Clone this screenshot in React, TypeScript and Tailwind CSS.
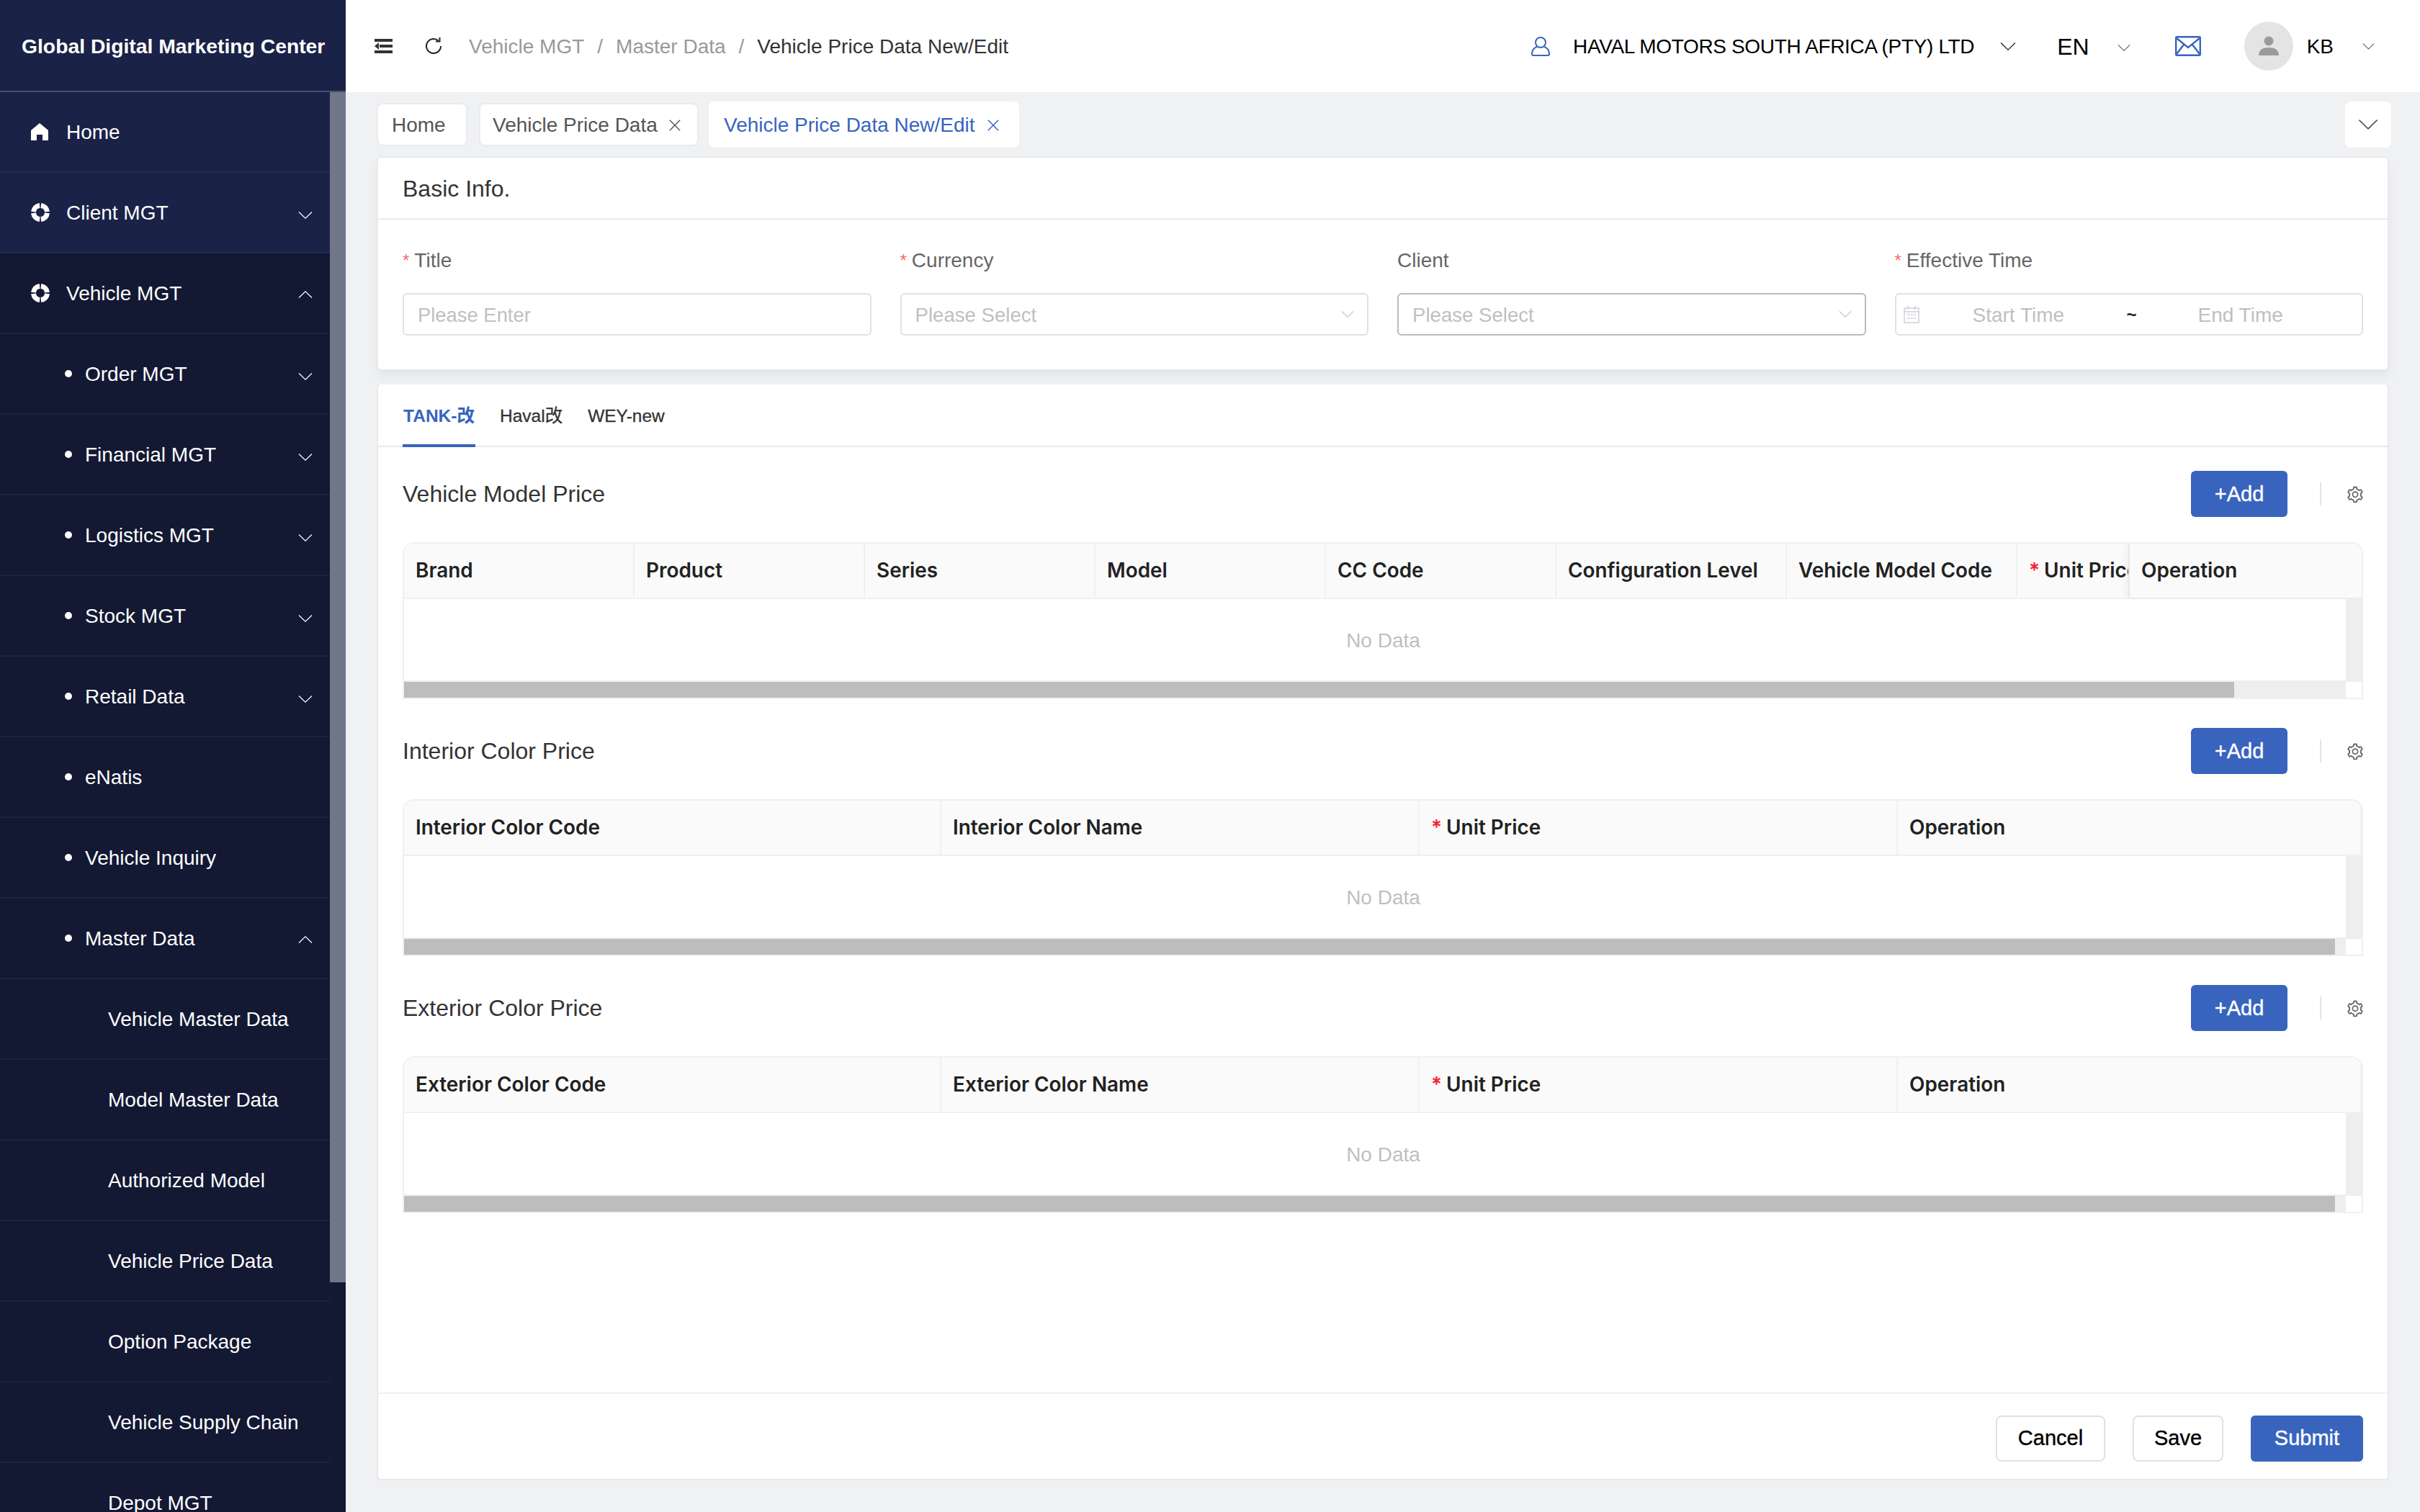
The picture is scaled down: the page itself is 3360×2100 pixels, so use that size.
import React from "react";
import { AiOutlineSetting } from "react-icons/ai";

const font = "font-['Liberation_Sans','Noto_Sans_CJK_SC',sans-serif]";

const Chevron = ({ up, className }: { up?: boolean; className?: string }) => (
  <svg viewBox="0 0 20 10" fill="none" stroke="currentColor" strokeWidth="1.2" className={className}>
    <polyline points={up ? "1,9.5 10,0.8 19,9.5" : "1,0.5 10,9.2 19,0.5"} />
  </svg>
);

const Close = () => (
  <svg viewBox="0 0 20 20" fill="none" stroke="currentColor" strokeWidth="1.6" className="w-[18px] h-[18px]">
    <path d="M2 2 L18 18 M18 2 L2 18" />
  </svg>
);

const HomeIcon = () => (
  <svg viewBox="0 0 24 24" fill="white" className="w-[24px] h-[24px]">
    <path d="M12 0 L24 10 V24 H16 V16 H8 V24 H0 V10 Z" />
  </svg>
);

const AimIcon = () => (
  <svg viewBox="0 0 26 26" fill="none" stroke="white" strokeWidth="7" className="w-[26px] h-[26px]">
    <circle cx="13" cy="13" r="9.5" pathLength={100} strokeDasharray="22 3" strokeDashoffset={-1.5} />
  </svg>
);

type MenuItem = { label: string; level: 1 | 2 | 3; icon?: "home" | "aim"; arrow?: "up" | "down"; light?: boolean };

const menu: MenuItem[] = [
  { label: "Home", level: 1, icon: "home", light: true },
  { label: "Client MGT", level: 1, icon: "aim", arrow: "down", light: true },
  { label: "Vehicle MGT", level: 1, icon: "aim", arrow: "up" },
  { label: "Order MGT", level: 2, arrow: "down" },
  { label: "Financial MGT", level: 2, arrow: "down" },
  { label: "Logistics MGT", level: 2, arrow: "down" },
  { label: "Stock MGT", level: 2, arrow: "down" },
  { label: "Retail Data", level: 2, arrow: "down" },
  { label: "eNatis", level: 2 },
  { label: "Vehicle Inquiry", level: 2 },
  { label: "Master Data", level: 2, arrow: "up" },
  { label: "Vehicle Master Data", level: 3 },
  { label: "Model Master Data", level: 3 },
  { label: "Authorized Model", level: 3 },
  { label: "Vehicle Price Data", level: 3 },
  { label: "Option Package", level: 3 },
  { label: "Vehicle Supply Chain", level: 3 },
  { label: "Depot MGT", level: 3 },
];

const Sidebar = () => (
  <aside className="w-[480px] h-[2100px] shrink-0 bg-[#131933] flex flex-col overflow-hidden text-white">
    <div className="h-[128px] shrink-0 bg-[#1a2247] border-b-2 border-[#4a5070] flex items-center pl-[30px] pt-[2px]">
      <span className="text-[28.3px] font-bold whitespace-nowrap">Global Digital Marketing Center</span>
    </div>
    <div className="flex flex-1 min-h-0">
      <nav className="flex-1 min-w-0">
        {menu.map((m) => (
          <div
            key={m.label}
            className={
              "h-[112px] flex items-center border-b-2 pr-[24px] text-[28px] " +
              (m.light ? "bg-[#1a2247] border-[#232b50]" : "border-[#1c2340]")
            }
          >
            {m.level === 1 && (
              <>
                <span className="w-[92px] pl-[43px] flex shrink-0">
                  {m.icon === "home" ? <HomeIcon /> : <AimIcon />}
                </span>
              </>
            )}
            {m.level === 2 && (
              <span className="w-[118px] pl-[90px] flex shrink-0">
                <span className="w-[10px] h-[10px] rounded-full bg-white" />
              </span>
            )}
            {m.level === 3 && <span className="w-[150px] shrink-0" />}
            <span className="flex-1 whitespace-nowrap pt-[2px]">{m.label}</span>
            {m.arrow && (
              <Chevron
                up={m.arrow === "up"}
                className={"w-[20px] h-[10px] text-white " + (m.arrow === "up" ? "mt-[4px]" : "mt-[8px]")}
              />
            )}
          </div>
        ))}
      </nav>
      <div className="w-[22px] shrink-0">
        <div className="h-[1653px] bg-[#72768a]" />
      </div>
    </div>
  </aside>
);

const TopBar = () => (
  <header className="h-[128px] shrink-0 bg-white flex items-center text-[28px]">
    <div className="ml-[40px] w-[25px] h-[20px] flex flex-col justify-between items-end relative">
      <span className="w-full h-[4px] bg-[#333]" />
      <span className="w-[18px] h-[4px] bg-[#333]" />
      <span className="w-full h-[4px] bg-[#333]" />
      <span className="absolute left-0 top-[5px] w-0 h-0 border-y-[5px] border-y-transparent border-r-[6px] border-r-[#333]" />
    </div>
    <svg viewBox="0 0 26 26" fill="none" stroke="#222" strokeWidth="2" className="ml-[44px] w-[26px] h-[26px]">
      <path d="M23 13 A10 10 0 1 1 19.5 5.4" />
      <path d="M21.5 1 V6.5 H16" />
    </svg>
    <nav className="ml-[36px] pt-[2px] flex items-center whitespace-nowrap text-[#999]">
      <span>Vehicle MGT</span>
      <span className="mx-[18px]">/</span>
      <span>Master Data</span>
      <span className="mx-[18px]">/</span>
      <span className="text-[#333]">Vehicle Price Data New/Edit</span>
    </nav>
    <div className="flex-1" />
    <svg viewBox="0 0 28 28" fill="none" stroke="#3864bd" strokeWidth="2" className="w-[28px] h-[28px]">
      <circle cx="14" cy="9" r="7" />
      <path d="M9 15 C3 17 2 21 2 25 C2 26 3 27 4 27 H24 C25 27 26 26 26 25 C26 21 25 17 19 15" />
    </svg>
    <span className="ml-[31px] pt-[2px] text-black whitespace-nowrap tracking-[-0.35px]">HAVAL MOTORS SOUTH AFRICA (PTY) LTD</span>
    <Chevron className="ml-[36px] w-[22px] h-[11px] text-[#222]" />
    <span className="ml-[57px] pt-[2px] text-[32px] text-black">EN</span>
    <Chevron className="ml-[39px] w-[18px] h-[9px] mt-[4px] text-[#555]" />
    <svg viewBox="0 0 36 28" fill="none" stroke="#3864bd" strokeWidth="2.4" className="ml-[62px] w-[36px] h-[28px]">
      <rect x="1.2" y="1.2" width="33.6" height="25.6" rx="1" />
      <path d="M2 3 L18 16 L34 3 M2 25 L12 12 M34 25 L24 12" />
    </svg>
    <div className="ml-[60px] w-[68px] h-[68px] rounded-full bg-[#e4e4e4] flex items-center justify-center">
      <svg viewBox="0 0 28 28" fill="#9a9a9a" className="w-[28px] h-[28px]">
        <circle cx="14" cy="7" r="6.5" />
        <path d="M0 27 C0 19 6 16 14 16 C22 16 28 19 28 27 Z" />
      </svg>
    </div>
    <span className="ml-[19px] pt-[2px] text-black">KB</span>
    <Chevron className="ml-[40px] mr-[63px] w-[17px] h-[9px] text-[#555]" />
  </header>
);

const TabBar = () => (
  <div className="h-[89px] shrink-0 pl-[43px] pr-[40px] flex items-center text-[28px] text-[#555]">
    <div className="h-[60px] w-[126px] bg-white border-2 border-[#eaebef] rounded-[8px] flex items-center pl-[19px] pt-[2px]">Home</div>
    <div className="ml-[16px] h-[60px] w-[305px] bg-white border-2 border-[#eaebef] rounded-[8px] flex items-center justify-between pl-[17px] pr-[22px] pt-[2px]">
      <span className="whitespace-nowrap">Vehicle Price Data</span>
      <Close />
    </div>
    <div className="ml-[14px] h-[64px] w-[431px] bg-white rounded-[8px] flex items-center justify-between pl-[21px] pr-[27px] pt-[2px] text-[#3864bd]">
      <span className="whitespace-nowrap">Vehicle Price Data New/Edit</span>
      <Close />
    </div>
    <div className="flex-1" />
    <div className="h-[64px] w-[64px] bg-white rounded-[8px] flex items-center justify-center text-[#555]">
      <Chevron className="w-[28px] h-[14px]" />
    </div>
  </div>
);

const Label = ({ text, required }: { text: string; required?: boolean }) => (
  <div className="h-[40px] flex items-center text-[28px] text-[#666] whitespace-nowrap">
    {required && <span className="text-[#f56c6c] mr-[7px] text-[24px]">*</span>}
    {text}
  </div>
);

const SelectBox = ({ dark }: { dark?: boolean }) => (
  <div
    className={
      "mt-[25px] h-[59px] rounded-[6px] border-2 flex items-center justify-between pl-[19px] pr-[18px] text-[27.6px] text-[#bfbfbf] " +
      (dark ? "border-[#bbbbbb]" : "border-[#e0e1e6]")
    }
  >
    <span className="pt-[2px]">Please Select</span>
    <Chevron className="w-[18px] h-[9px] text-[#bbb]" />
  </div>
);

const BasicInfo = () => (
  <section className="mx-[43px] h-[296px] shrink-0 w-[2794px] bg-white border-2 border-[#e8e9ee] border-b-0 rounded-[6px] shadow-[0_10px_14px_rgba(0,0,0,0.05)]">
    <div className="h-[86px] border-b-2 border-[#e8e9ee] flex items-center pl-[34px] pt-[2px] text-[32px] text-[#333]">Basic Info.</div>
    <div className="grid grid-cols-4 gap-x-[40px] pl-[34px] pr-[34px] pt-[37px]">
      <div>
        <Label text="Title" required />
        <div className="mt-[25px] h-[59px] rounded-[6px] border-2 border-[#e0e1e6] flex items-center pl-[19px] pt-[2px] text-[27.4px] text-[#bfbfbf]">Please Enter</div>
      </div>
      <div>
        <Label text="Currency" required />
        <SelectBox />
      </div>
      <div>
        <Label text="Client" />
        <SelectBox dark />
      </div>
      <div>
        <Label text="Effective Time" required />
        <div className="mt-[25px] h-[59px] rounded-[6px] border-2 border-[#e0e1e6] flex items-center pl-[10px] text-[28px] text-[#bfbfbf]">
          <svg viewBox="0 0 22 24" fill="none" stroke="#d0d0d6" strokeWidth="1.5" className="w-[22px] h-[24px]">
            <rect x="1" y="3" width="20" height="20" />
            <path d="M1 8 H21 M6 0 V5 M16 0 V5 M5 12 H9 M10 12 H13 M14 12 H17 M5 17 H9 M10 17 H13 M14 17 H17" />
          </svg>
          <span className="ml-[74px] w-[130px] pt-[2px] whitespace-nowrap">Start Time</span>
          <span className="ml-[84px] w-[99px] text-[#222] text-[24px] font-bold">~</span>
          <span className="pt-[2px] whitespace-nowrap">End Time</span>
        </div>
      </div>
    </div>
  </section>
);

type Col = { title: string; required?: boolean; width: string; fixed?: boolean };

const modelCols: Col[] = [
  { title: "Brand", width: "w-[320px]" },
  { title: "Product", width: "w-[320px]" },
  { title: "Series", width: "w-[320px]" },
  { title: "Model", width: "w-[320px]" },
  { title: "CC Code", width: "w-[320px]" },
  { title: "Configuration Level", width: "w-[320px]" },
  { title: "Vehicle Model Code", width: "w-[320px]" },
  { title: "Unit Price", required: true, width: "w-[156px]" },
  { title: "Operation", width: "flex-1", fixed: true },
];

const colorCols = (kind: string): Col[] => [
  { title: `${kind} Color Code`, width: "w-[746px]" },
  { title: `${kind} Color Name`, width: "w-[664px]" },
  { title: "Unit Price", required: true, width: "w-[664px]" },
  { title: "Operation", width: "flex-1" },
];

const PriceTable = ({ cols, thumb }: { cols: Col[]; thumb: string }) => (
  <div className="mt-[35px] h-[218px] border-2 border-[#f0f0f0] rounded-t-[16px] overflow-hidden flex flex-col">
    <div className="h-[77px] shrink-0 bg-[#fafafa] border-b-2 border-[#f0f0f0] flex">
      {cols.map((c) => (
        <div
          key={c.title}
          className={
            c.width +
            " shrink-0 overflow-hidden whitespace-nowrap flex items-center pl-[16px] pt-[1px] text-[27.9px] font-['Inter',sans-serif] font-semibold text-[#222] " +
            (c.fixed ? "shadow-[-6px_0_6px_rgba(0,0,0,0.04)]" : "border-r-2 border-[#f0f0f0]")
          }
        >
          {c.required && <span className="text-[#f5222d] mr-[6px]">*</span>}
          {c.title}
        </div>
      ))}
    </div>
    <div className="h-[113px] shrink-0 flex">
      <div className="flex-1 flex items-center justify-center pl-[23px] pt-[2px] text-[28px] text-[#bfbfbf]">No Data</div>
      <div className="w-[22px] bg-[#eeeeee]" />
    </div>
    <div className="h-[24px] shrink-0 border-t-2 border-[#eeeeee] flex bg-[#eeeeee]">
      <div className="flex-1 min-w-0">
        <div className={thumb + " h-[22px] bg-[#bdbdbd]"} />
      </div>
      <div className="w-[22px] bg-white" />
    </div>
  </div>
);

const PriceSection = ({ title, cols, thumb }: { title: string; cols: Col[]; thumb: string }) => (
  <div className="mb-[40px]">
    <div className="h-[64px] flex items-center">
      <span className="flex-1 text-[32px] text-[#333]">{title}</span>
      <button className="h-[64px] w-[134px] pt-[1px] rounded-[6px] bg-[#3864bd] text-white text-[29px] [-webkit-text-stroke:0.4px]">+Add</button>
      <span className="ml-[45px] w-[2px] h-[32px] bg-[#e4e4e4]" />
      <AiOutlineSetting className="ml-[34px] -mr-[2px] mt-[2px] w-[26px] h-[26px] text-[#666]" />
    </div>
    <PriceTable cols={cols} thumb={thumb} />
  </div>
);

const Editor = () => (
  <section className="mx-[43px] mt-[21px] w-[2794px] h-[1522px] shrink-0 bg-white border-2 border-t-0 border-[#e8e9ee] rounded-[6px] flex flex-col">
    <div className="h-[87px] shrink-0 border-b-2 border-[#e8e9ee] flex items-end pl-[34px] text-[24.5px] text-[#333] [-webkit-text-stroke:0.3px]">
      <div className="h-[87px] w-[101px] pt-[6px] flex items-center justify-center border-b-4 border-[#3864bd] text-[#3864bd] font-bold -mb-[2px] whitespace-nowrap [-webkit-text-stroke:0]">TANK-改</div>
      <div className="h-[87px] ml-[34px] pt-[6px] flex items-center whitespace-nowrap">Haval改</div>
      <div className="h-[87px] ml-[35px] pt-[6px] flex items-center whitespace-nowrap">WEY-new</div>
    </div>
    <div className="flex-1 pl-[34px] pr-[34px] pt-[33px]">
      <PriceSection title="Vehicle Model Price" cols={modelCols} thumb="w-[2541px]" />
      <PriceSection title="Interior Color Price" cols={colorCols("Interior")} thumb="w-[2681px]" />
      <PriceSection title="Exterior Color Price" cols={colorCols("Exterior")} thumb="w-[2681px]" />
    </div>
    <div className="h-[120px] shrink-0 border-t-2 border-[#f0f0f0] flex items-center justify-end gap-x-[38px] pr-[34px] pt-[6px] text-[29px] [-webkit-text-stroke:0.4px]">
      <button className="h-[64px] w-[152px] rounded-[8px] border-2 border-[#e0e1e6] text-black">Cancel</button>
      <button className="h-[64px] w-[126px] rounded-[8px] border-2 border-[#e0e1e6] text-black">Save</button>
      <button className="h-[64px] w-[156px] rounded-[6px] bg-[#3864bd] text-white">Submit</button>
    </div>
  </section>
);

export default function App() {
  return (
    <div className={font + " w-[3360px] h-[2100px] flex overflow-hidden bg-[#f0f1f3]"}>
      <Sidebar />
      <main className="flex-1 min-w-0 flex flex-col">
        <TopBar />
        <TabBar />
        <BasicInfo />
        <Editor />
      </main>
    </div>
  );
}
